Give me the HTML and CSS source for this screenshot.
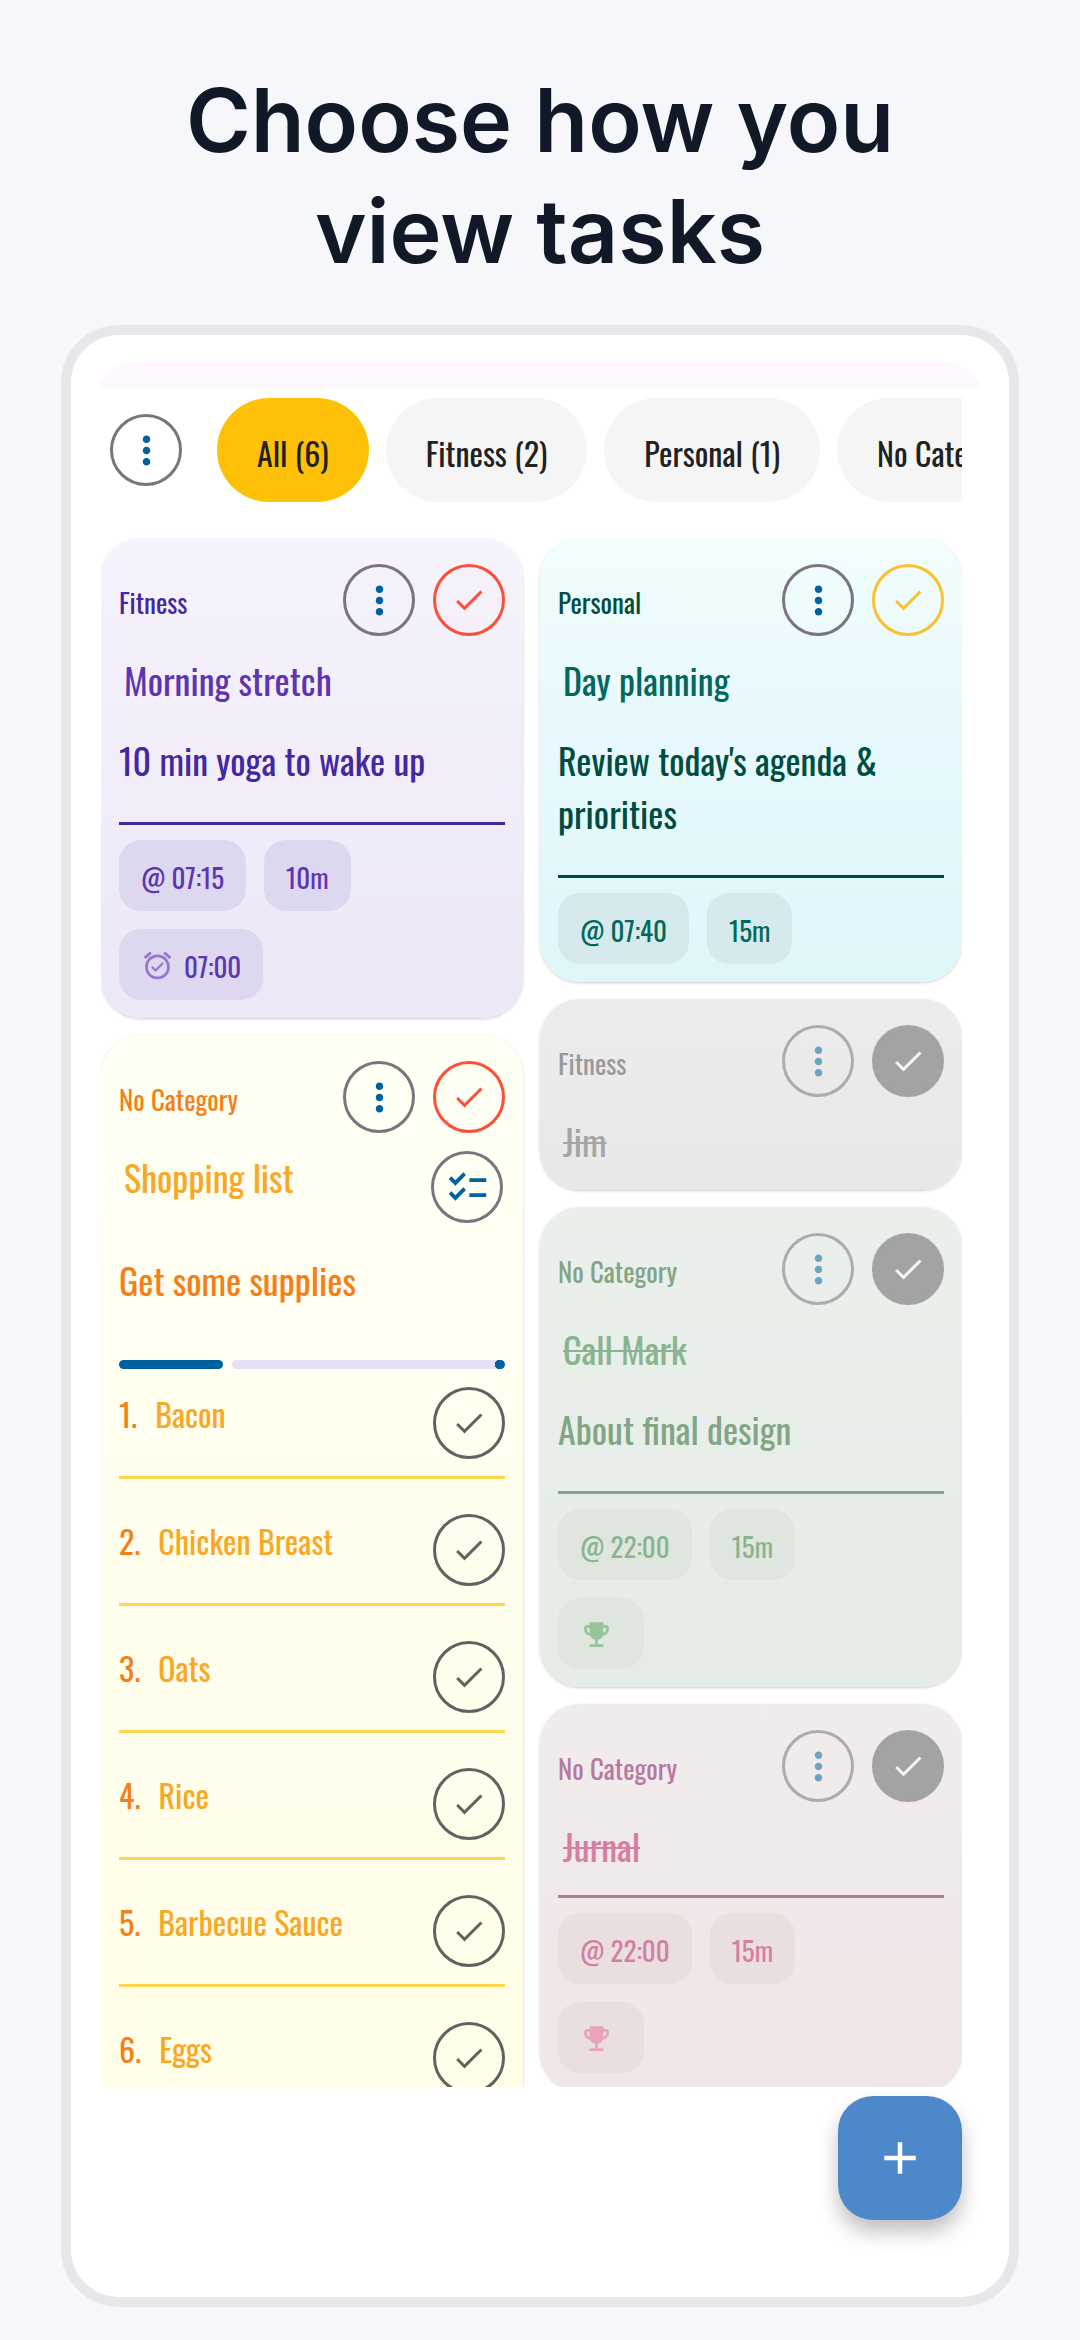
FILE: index.html
```html
<!DOCTYPE html>
<html lang="en">
<head>
<meta charset="utf-8">
<meta name="viewport" content="width=device-width, initial-scale=1">
<title>Choose how you view tasks</title>
<link rel="stylesheet" href="styles.css">
</head>
<body>
<svg class="sprite" aria-hidden="true">
  <symbol id="dots" viewBox="0 0 24 24"><path d="M12 8c1.100 0 2-.9 2-2s-.9-2-2-2-2 .9-2 2 .9 2 2 2zm0 2c-1.100 0-2 .9-2 2s.9 2 2 2 2-.9 2-2-.9-2-2-2zm0 6c-1.100 0-2 .9-2 2s.9 2 2 2 2-.9 2-2-.9-2-2-2z"/></symbol>
  <symbol id="check" viewBox="0 0 24 24"><path d="M9 16.170 4.830 12l-1.420 1.410L9 19 21 7l-1.410-1.410z"/></symbol>
  <symbol id="list" viewBox="0 0 24 24"><path d="M22 7h-9v2h9V7zm0 8h-9v2h9v-2zM5.540 11 2 7.460l1.410-1.410 2.120 2.120 4.240-4.240 1.410 1.410L5.540 11zm0 8L2 15.460l1.410-1.410 2.120 2.120 4.240-4.240 1.410 1.410L5.540 19z"/></symbol>
  <symbol id="alarm" viewBox="0 0 24 24"><path d="M22 5.720l-4.600-3.860-1.290 1.530 4.600 3.860L22 5.720zM7.880 3.390L6.600 1.860 2 5.710l1.290 1.530 4.590-3.850zM12 4c-4.970 0-9 4.030-9 9s4.020 9 9 9 9-4.030 9-9-4.030-9-9-9zm0 16c-3.870 0-7-3.130-7-7s3.130-7 7-7 7 3.130 7 7-3.130 7-7 7zm-1.460-5.470L8.410 12.400l-1.060 1.060 3.180 3.180 6-6-1.060-1.060-4.930 4.950z"/></symbol>
  <symbol id="trophy" viewBox="0 0 24 24"><path d="M19 5h-2V3H7v2H5c-1.100 0-2 .9-2 2v1c0 2.550 1.920 4.630 4.390 4.940.63 1.500 1.980 2.630 3.610 2.960V19H7v2h10v-2h-4v-3.100c1.630-.33 2.980-1.460 3.610-2.960C19.080 12.630 21 10.550 21 8V7c0-1.100-.9-2-2-2zM5 8V7h2v3.820C5.840 10.400 5 9.300 5 8zm14 0c0 1.300-.84 2.400-2 2.820V7h2v1z"/></symbol>
  <symbol id="plus" viewBox="0 0 24 24"><path d="M19 13h-6v6h-2v-6H5v-2h6V5h2v6h6z"/></symbol>
</svg>
<h1 class="headline">Choose how you<br>view tasks</h1>
<main class="phone">
  <div class="strip"></div>
  <div class="screen">
    <nav class="filters" aria-label="Categories">
      <button class="round" aria-label="Options"><svg class="i-dots"><use href="#dots"/></svg></button>
      <div class="tabs">
        <button class="tab active">All (6)</button>
        <button class="tab">Fitness (2)</button>
        <button class="tab">Personal (1)</button>
        <button class="tab">No Category (3)</button>
      </div>
    </nav>
    <div class="board">
      <div class="column">
        <article class="card violet">
          <header class="head"><span class="category">Fitness</span>
            <button class="round" aria-label="Task options"><svg class="i-dots"><use href="#dots"/></svg></button>
            <button class="round tick red" aria-label="Complete"><svg class="i-check"><use href="#check"/></svg></button></header>
          <div class="title-row"><h2 class="title">Morning stretch</h2></div>
          <p class="desc">10 min yoga to wake up</p>
          <hr class="rule">
          <div class="chips"><span class="chip">@ 07:15</span><span class="chip">10m</span></div>
          <div class="chips"><span class="chip"><svg class="i-small"><use href="#alarm"/></svg>07:00</span></div>
        </article>
        <article class="card yellow">
          <header class="head"><span class="category">No Category</span>
            <button class="round" aria-label="Task options"><svg class="i-dots"><use href="#dots"/></svg></button>
            <button class="round tick red" aria-label="Complete"><svg class="i-check"><use href="#check"/></svg></button></header>
          <div class="title-row"><h2 class="title">Shopping list</h2>
            <button class="round checklist" aria-label="Show checklist"><svg class="i-dots"><use href="#list"/></svg></button></div>
          <p class="desc">Get some supplies</p>
          <div class="progress" role="progressbar" aria-label="Items done" aria-valuenow="28" aria-valuemin="0" aria-valuemax="100"><span class="done" style="width:27%"></span><span class="left"></span></div>
          <ol class="items">
            <li class="item"><span class="num">1.</span><span class="name">Bacon</span><button class="round tick dark" aria-label="Check Bacon"><svg class="i-check"><use href="#check"/></svg></button></li>
            <li class="item"><span class="num">2.</span><span class="name">Chicken Breast</span><button class="round tick dark" aria-label="Check Chicken Breast"><svg class="i-check"><use href="#check"/></svg></button></li>
            <li class="item"><span class="num">3.</span><span class="name">Oats</span><button class="round tick dark" aria-label="Check Oats"><svg class="i-check"><use href="#check"/></svg></button></li>
            <li class="item"><span class="num">4.</span><span class="name">Rice</span><button class="round tick dark" aria-label="Check Rice"><svg class="i-check"><use href="#check"/></svg></button></li>
            <li class="item"><span class="num">5.</span><span class="name">Barbecue Sauce</span><button class="round tick dark" aria-label="Check Barbecue Sauce"><svg class="i-check"><use href="#check"/></svg></button></li>
            <li class="item"><span class="num">6.</span><span class="name">Eggs</span><button class="round tick dark" aria-label="Check Eggs"><svg class="i-check"><use href="#check"/></svg></button></li>
          </ol>
        </article>
      </div>
      <div class="column">
        <article class="card cyan">
          <header class="head"><span class="category">Personal</span>
            <button class="round" aria-label="Task options"><svg class="i-dots"><use href="#dots"/></svg></button>
            <button class="round tick amber" aria-label="Complete"><svg class="i-check"><use href="#check"/></svg></button></header>
          <div class="title-row"><h2 class="title">Day planning</h2></div>
          <p class="desc">Review today's agenda &amp; priorities</p>
          <hr class="rule">
          <div class="chips"><span class="chip">@ 07:40</span><span class="chip">15m</span></div>
        </article>
        <article class="card gray finished">
          <header class="head"><span class="category">Fitness</span>
            <button class="round" aria-label="Task options"><svg class="i-dots"><use href="#dots"/></svg></button>
            <button class="round tick full" aria-label="Completed"><svg class="i-check"><use href="#check"/></svg></button></header>
          <div class="title-row"><h2 class="title">Jim</h2></div>
        </article>
        <article class="card green finished">
          <header class="head"><span class="category">No Category</span>
            <button class="round" aria-label="Task options"><svg class="i-dots"><use href="#dots"/></svg></button>
            <button class="round tick full" aria-label="Completed"><svg class="i-check"><use href="#check"/></svg></button></header>
          <div class="title-row"><h2 class="title">Call Mark</h2></div>
          <p class="desc">About final design</p>
          <hr class="rule">
          <div class="chips"><span class="chip">@ 22:00</span><span class="chip">15m</span></div>
          <div class="chips"><span class="chip award"><svg class="i-small"><use href="#trophy"/></svg></span></div>
        </article>
        <article class="card pink finished">
          <header class="head"><span class="category">No Category</span>
            <button class="round" aria-label="Task options"><svg class="i-dots"><use href="#dots"/></svg></button>
            <button class="round tick full" aria-label="Completed"><svg class="i-check"><use href="#check"/></svg></button></header>
          <div class="title-row"><h2 class="title">Jurnal</h2></div>
          <hr class="rule">
          <div class="chips"><span class="chip">@ 22:00</span><span class="chip">15m</span></div>
          <div class="chips"><span class="chip award"><svg class="i-small"><use href="#trophy"/></svg></span></div>
        </article>
      </div>
    </div>
    <button class="fab" aria-label="Add task"><svg class="i-plus"><use href="#plus"/></svg></button>
  </div>
</main>
</body>
</html>
```
FILE: styles.css
```css
* { box-sizing: border-box; }

body {
  margin: 0;
  height: 100vh;
  padding: 65px 61px 33px;
  display: flex;
  flex-direction: column;
  background: #f6f7fb;
  font-family: Oswald, "Roboto Condensed", "Liberation Sans Narrow", "Liberation Sans", sans-serif;
  font-weight: 370;
}

button { font: inherit; color: inherit; border: 0; padding: 0; cursor: pointer; }
svg { display: block; fill: currentColor; }
.sprite { position: absolute; width: 0; height: 0; }

.headline {
  margin: 0 0 38px;
  text-align: center;
  font: 600 88px/111px Inter, sans-serif;
  color: #111827;
}

.phone {
  flex: 1;
  min-height: 0;
  display: flex;
  flex-direction: column;
  padding: 27px 22px 0;
  border: 10px solid #e5e7eb;
  border-radius: 58px;
  background: #fff;
}
.strip {
  flex: none;
  height: 44px;
  margin-bottom: -18px;
  border-radius: 44px 44px 0 0;
  background: linear-gradient(#fef7ff 26px, #fff 26px);
}
.screen {
  flex: 1;
  min-height: 0;
  display: flex;
  flex-direction: column;
  padding: 10px 25px 77px 8px;
}

.filters { display: flex; align-items: center; gap: 35px; padding-left: 9px; margin-bottom: 36px; }
.tabs { flex: 1; min-width: 0; display: flex; gap: 17px; overflow: hidden; }
.tab {
  flex: none;
  height: 104px;
  padding: 4px 40px 0;
  border-radius: 52px;
  background: #f5f5f5;
  color: #212121;
  font-size: 32px;
}
.tab.active { background: #ffc107; }

.round {
  flex: none;
  width: 72px;
  height: 72px;
  display: grid;
  place-items: center;
  border: 3px solid #79747e;
  border-radius: 50%;
  background: none;
  color: #0061a0;
}
.i-dots { width: 45px; height: 45px; }
.i-check { width: 36px; height: 36px; }
.i-small { width: 33px; height: 33px; }
.i-plus { width: 54px; height: 54px; }
.tick { color: #616161; border-color: currentColor; }
.red { color: #ff4e36; }
.amber { color: #fbc02d; }
.full { background: #a3a3a3; border-color: #a3a3a3; color: #f5f5f5; }

.board {
  flex: 1;
  min-height: 0;
  display: grid;
  grid-template-columns: 1fr 1fr;
  align-items: start;
  gap: 17px;
  overflow-y: auto;
  scrollbar-width: none;
}
.column { display: flex; flex-direction: column; gap: 17px; }
.card {
  padding: 26px 18px 18px;
  border-radius: 40px;
  color: var(--strong);
  box-shadow: 0 1px 3px rgba(0, 0, 0, 0.2);
}
.violet { --strong: #4527a0; --soft: #5e35b1; --chip: #ddd8ef; --icon: #9575cd; background: linear-gradient(#f6f3fc, #ede7f6); }
.yellow { --strong: #f57f17; --soft: #f9a825; background: linear-gradient(#fffff4, #fffde7); }
.cyan { --strong: #004d40; --soft: #00695c; --chip: #d6eaed; background: linear-gradient(#f2fdfd, #e8f9fe 38%, #dff6f9); }
.gray { --strong: #999; --soft: #a5a5a5; background: linear-gradient(#ececec, #e8e8e8); }
.green { --strong: #82a584; --soft: #8ab48d; --chip: #dfe6df; --icon: #98c49b; background: linear-gradient(#eaefeb, #e5ece5); }
.pink { --strong: #b6799d; --soft: #d57ea2; --chip: #e9dfdf; --icon: #eba2bc; background: linear-gradient(#f1ecec, #f0e6e6); }

.head { display: flex; align-items: center; gap: 18px; }
.category { flex: 1; padding-top: 4px; font-size: 27px; }
.finished .round:not(.full) { border-color: #adaab0; color: #70a3c2; }

.title-row { display: flex; align-items: flex-start; padding: 18px 2px 8px 5px; }
.title { flex: 1; margin: 0; font-size: 36px; line-height: 51px; font-weight: 370; color: var(--soft); }
.title:only-child { margin-bottom: -2px; }
.finished .title { text-decoration: line-through 2px; }
.desc { margin: 0; padding: 22px 0 18px; font-size: 36px; line-height: 53px; font-weight: 390; }
.rule { height: 3px; margin: 18px 0 15px; border: 0; background: var(--strong); }

.chips { display: flex; gap: 18px; }
.chips + .chips { margin-top: 18px; }
.chip {
  height: 71px;
  display: flex;
  align-items: center;
  gap: 10px;
  padding: 2px 22px 0;
  border-radius: 22px;
  background: var(--chip);
  color: var(--soft);
  font-size: 27px;
}
.chip svg { color: var(--icon); }
.award { padding-right: 31px; }

.progress { display: flex; gap: 9px; height: 9px; margin: 36px 0 18px; }
.done, .left { border-radius: 5px; background: #0061a0; }
.left { flex: 1; background: radial-gradient(circle at calc(100% - 5px) 50%, #0061a0 5px, #e8def8 5px); }

.items { margin: 0; padding: 0; list-style: none; }
.item {
  display: flex;
  align-items: flex-start;
  gap: 18px;
  padding: 35px 0 17px;
  border-bottom: 3px solid #ffd54f;
  font-size: 32px;
  line-height: 54px;
}
.item:first-child { padding-top: 0; }
.name { flex: 1; color: var(--soft); }

.fab {
  flex: none;
  align-self: flex-end;
  width: 124px;
  height: 124px;
  margin-top: 9px;
  display: grid;
  place-items: center;
  border-radius: 35px;
  background: #4d88cb;
  color: #fff;
  box-shadow: 0 12px 20px rgba(0, 0, 0, 0.25);
}
```
